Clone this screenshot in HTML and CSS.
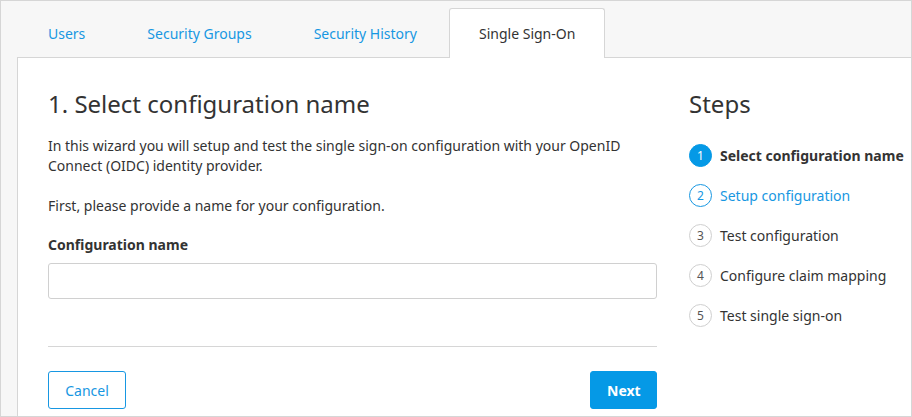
FILE: index.html
```html
<!DOCTYPE html>
<html lang="en">
<head>
<meta charset="utf-8">
<title>Single Sign-On</title>
<link rel="stylesheet" href="styles.css">
</head>
<body>
<div class="frame">
  <nav class="tabs">
    <a class="tab">Users</a>
    <a class="tab">Security Groups</a>
    <a class="tab">Security History</a>
    <a class="tab active">Single Sign-On</a>
  </nav>
  <div class="card">
    <section class="main">
      <h1 class="title">1. Select configuration name</h1>
      <p class="text">In this wizard you will setup and test the single sign-on configuration with your OpenID Connect (OIDC) identity provider.</p>
      <p class="text">First, please provide a name for your configuration.</p>
      <label class="label" for="cfg">Configuration name</label>
      <input class="input" id="cfg" type="text">
      <hr class="divider">
      <div class="actions">
        <button class="btn btn-outline">Cancel</button>
        <button class="btn btn-primary">Next</button>
      </div>
    </section>
    <aside class="steps">
      <h2 class="title">Steps</h2>
      <ol class="step-list">
        <li class="step current"><span class="num">1</span><span class="step-text">Select configuration name</span></li>
        <li class="step next"><span class="num">2</span><span class="step-text">Setup configuration</span></li>
        <li class="step"><span class="num">3</span><span class="step-text">Test configuration</span></li>
        <li class="step"><span class="num">4</span><span class="step-text">Configure claim mapping</span></li>
        <li class="step"><span class="num">5</span><span class="step-text">Test single sign-on</span></li>
      </ol>
    </aside>
  </div>
</div>
</body>
</html>
```
FILE: styles.css
```css
* { box-sizing: border-box; }
html, body { margin: 0; padding: 0; }
body {
  font-family: "Noto Sans", "Open Sans", sans-serif;
  color: #333;
  font-size: 14px;
  background: #fff;
}
.frame {
  width: 912px;
  height: 417px;
  border: 1px solid #d6d6d6;
  background: #f7f7f7;
  padding-left: 16px;
  display: flex;
  flex-direction: column;
  overflow: hidden;
}
.tabs {
  display: flex;
  padding: 7px 0 0 1px;
  height: 57px;
  flex: none;
  position: relative;
  z-index: 1;
}
.tab {
  display: flex;
  align-items: center;
  padding: 0 29px;
  margin-right: 2px;
  height: 50px;
  color: #1797e2;
  white-space: nowrap;
  border: 1px solid transparent;
  border-bottom: none;
  border-radius: 3px 3px 0 0;
}
.tab.active {
  background: #fff;
  color: #333;
  border-color: #d6d6d6;
}
.card {
  flex: 1;
  margin-top: -1px;
  background: #fff;
  border-top: 1px solid #d6d6d6;
  border-left: 1px solid #d6d6d6;
  padding: 31px 0 0 30px;
  display: grid;
  grid-template-columns: 609px 1fr;
  column-gap: 32px;
  align-items: start;
}
.title {
  font-size: 24px;
  font-weight: 400;
  line-height: 30px;
  margin: 0;
  color: #333;
  white-space: nowrap;
}
.text {
  margin: 17px 0 0;
  line-height: 20px;
}
.text + .text { margin-top: 20px; }
.label {
  display: block;
  font-weight: 700;
  line-height: 20px;
  margin-top: 19px;
}
.input {
  display: block;
  width: 100%;
  height: 36px;
  margin-top: 8px;
  border: 1px solid #d0d0d0;
  border-radius: 3px;
  font: inherit;
  padding: 0 10px;
}
.divider {
  border: none;
  border-top: 1px solid #d6d6d6;
  margin: 47px 0 0;
}
.actions {
  display: flex;
  justify-content: space-between;
  margin-top: 24px;
}
.btn {
  height: 38px;
  font-family: inherit;
  font-size: 14px;
  border-radius: 3px;
  padding: 0 16px;
  cursor: pointer;
}
.btn-outline {
  background: #fff;
  color: #1797e2;
  border: 1px solid #1797e2;
  width: 78px;
}
.btn-primary {
  background: #0599e6;
  border: 1px solid #0599e6;
  color: #fff;
  font-weight: 700;
  width: 67px;
}
.steps { white-space: nowrap; }
.step-list {
  list-style: none;
  margin: 16px 0 0;
  padding: 0;
}
.step {
  display: flex;
  align-items: center;
  height: 40px;
  gap: 8px;
}
.num {
  width: 23px;
  height: 23px;
  border-radius: 50%;
  border: 1px solid #cfcfcf;
  color: #555;
  font-size: 12px;
  display: flex;
  align-items: center;
  justify-content: center;
  flex: none;
}
.step.current .num {
  background: #0599e6;
  border-color: #0599e6;
  color: #fff;
}
.step.current .step-text { font-weight: 700; }
.step.next .num { border-color: #1797e2; color: #1797e2; }
.step.next .step-text { color: #1797e2; }
```
